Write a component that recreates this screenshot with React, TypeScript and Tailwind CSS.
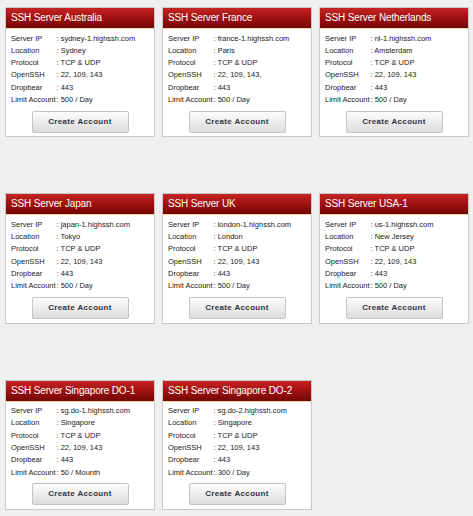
import React from "react";

type Server = {
  name: string;
  ip: string;
  location: string;
  ssh: string;
  limit: string;
};

const servers: Server[] = [
  { name: "SSH Server Australia", ip: "sydney-1.highssh.com", location: "Sydney", ssh: "22, 109, 143", limit: "500 / Day" },
  { name: "SSH Server France", ip: "france-1.highssh.com", location: "Paris", ssh: "22, 109, 143,", limit: "500 / Day" },
  { name: "SSH Server Netherlands", ip: "nl-1.highssh.com", location: "Amsterdam", ssh: "22, 109, 143", limit: "500 / Day" },
  { name: "SSH Server Japan", ip: "japan-1.highssh.com", location: "Tokyo", ssh: "22, 109, 143", limit: "500 / Day" },
  { name: "SSH Server UK", ip: "london-1.highssh.com", location: "London", ssh: "22, 109, 143", limit: "500 / Day" },
  { name: "SSH Server USA-1", ip: "us-1.highssh.com", location: "New Jersey", ssh: "22, 109, 143", limit: "500 / Day" },
  { name: "SSH Server Singapore DO-1", ip: "sg.do-1.highssh.com", location: "Singapore", ssh: "22, 109, 143", limit: "50 / Mounth" },
  { name: "SSH Server Singapore DO-2", ip: "sg.do-2.highssh.com", location: "Singapore", ssh: "22, 109, 143", limit: "300 / Day" },
];

function Row({ label, value }: { label: string; value: string }) {
  return (
    <div className="flex h-[12.3px] items-center whitespace-nowrap">
      <span className="w-[45.5px] shrink-0">{label}</span>
      <span>: {value}</span>
    </div>
  );
}

function Card({ s }: { s: Server }) {
  return (
    <div className="w-[150px] border border-[#c9c9c9] bg-white">
      <div className="h-[20px] bg-[linear-gradient(to_bottom,#c62424,#a01010_50%,#740606)] px-[5px] text-[10px] leading-[19px] tracking-[-0.15px] text-white whitespace-nowrap [font-family:'Liberation_Sans',Arial,sans-serif]">
        {s.name}
      </div>
      <div className="h-px bg-[#ecd9a6]" />
      <div className="px-[5px] pt-[3px] pb-[3.5px] text-[7.5px] text-[#222] [font-family:'Liberation_Sans',Arial,sans-serif]">
        <Row label="Server IP" value={s.ip} />
        <Row label="Location" value={s.location} />
        <Row label="Protocol" value="TCP & UDP" />
        <Row label="OpenSSH" value={s.ssh} />
        <Row label="Dropbear" value="443" />
        <Row label="Limit Account" value={s.limit} />
        <div className="mt-[5px] flex justify-center">
          <button className="flex h-[22px] w-[97px] items-center justify-center rounded-[2px] border border-[#c4c4c4] bg-[linear-gradient(to_bottom,#fdfdfd,#e9e9e9_60%,#dcdcdc)] text-[8px] font-bold tracking-[0.35px] text-[#333344] [font-family:'Liberation_Sans',Arial,sans-serif]">
            Create Account
          </button>
        </div>
      </div>
    </div>
  );
}

export default function App() {
  return (
    <div className="min-h-[516px] w-[473px] bg-[#efefef] pl-[5px] pt-[7px]">
      <div className="grid grid-cols-[150px_150px_150px] gap-x-[7px] gap-y-[56px]">
        {servers.map((s) => (
          <Card key={s.name} s={s} />
        ))}
      </div>
    </div>
  );
}
